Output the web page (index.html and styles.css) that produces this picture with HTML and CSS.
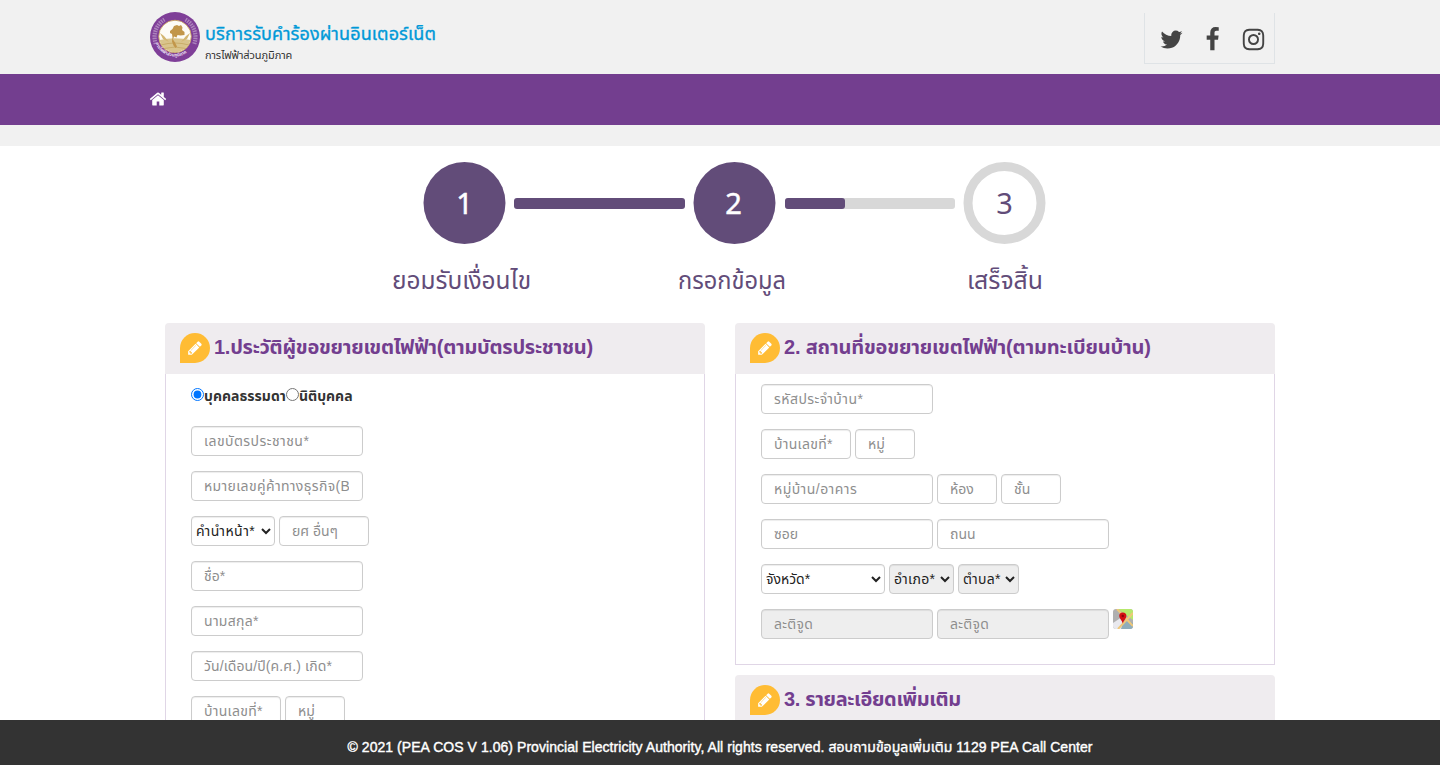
FILE: index.html
```html
<!DOCTYPE html>
<html lang="th">
<head>
<meta charset="utf-8">
<title>PEA COS</title>
<link rel="stylesheet" href="styles.css">
</head>
<body>
<svg width="0" height="0" class="defs">
  <symbol id="pencil" viewBox="0 0 1792 1792"><path d="M491 1536l91-91-235-235-91 91v107h128v128h107zm523-928q0-22-22-22-10 0-17 7l-542 542q-7 7-7 17 0 22 22 22 10 0 17-7l542-542q7-7 7-17zm-54-192l416 416-832 832h-416v-416zm683 96q0 53-37 90l-166 166-416-416 166-165q36-38 90-38 53 0 91 38l235 234q37 39 37 91z"/></symbol>
</svg>
<header class="top">
  <div class="container top-row">
    <div class="brand">
      <svg class="seal" viewBox="0 0 50 50">
        <defs><path id="arc" d="M5.500 31A20.800 20.800 0 0 0 44.500 31"/></defs>
        <circle cx="25" cy="25" r="25" fill="#7f3f98"/>
        <path d="M14.500 7.500A20.300 20.300 0 0 0 5.800 32M35.500 7.500A20.300 20.300 0 0 1 44.200 32" fill="none" stroke="#c9b0d4" stroke-width="4.200" stroke-dasharray="1.500 .9" opacity=".6"/>
        <circle cx="25" cy="24.500" r="16.300" fill="#fdfbf6" stroke="#c39a4c" stroke-width=".8"/>
        <path d="M9.500 28Q25 24.500 40.500 28A16 16 0 0 1 9.500 28z" fill="#d9c48c"/>
        <path d="M11 33Q25 29 39 33M14 36.500Q25 33.500 36 36.500" fill="none" stroke="#c2a25a" stroke-width=".7"/>
        <path d="M20 19l2.500-2 1.500-3 3-1 2 1 2-1 1.500 2.500-.5 2.500 2.500 2v3l-4 .5-3-.5-1 2.500-2.500-1-1 3 2 3 2 4-1.500 1.500-2-2.500-1.500-4 .5-4-.5-3.500-2-1z" fill="#c2964a"/>
        <path d="M10 21l4 3 5 6-6-3zM40 21l-4 3-5 6 6-3z" fill="#d3b672"/>
        <text class="seal-text"><textPath href="#arc" textLength="38" lengthAdjust="spacingAndGlyphs">การไฟฟ้าส่วนภูมิภาค</textPath></text>
      </svg>
      <div class="brand-text">
        <div class="brand-name">บริการรับคำร้องผ่านอินเตอร์เน็ต</div>
        <div class="brand-sub">การไฟฟ้าส่วนภูมิภาค</div>
      </div>
    </div>
    <div class="social">
      <svg viewBox="0 0 1792 1792"><path d="M1684 408q-67 98-162 167 1 14 1 42 0 130-38 259.5t-115.5 248.5-184.5 210.5-258 146-323 54.5q-271 0-496-145 35 4 78 4 225 0 401-138-105-2-188-64.5t-114-159.5q33 5 61 5 43 0 85-11-112-23-185.5-111.5t-73.5-205.5v-4q68 38 146 41-66-44-105-115t-39-154q0-88 44-163 121 149 294.5 238.5t371.5 99.5q-8-38-8-74 0-134 94.500-228.500t228.500-94.500q140 0 236 102 109-21 205-78-37 115-142 178 93-10 186-50z"/></svg>
      <svg viewBox="0 0 1792 1792"><path d="M1343 12v264h-157q-86 0-116 36t-30 108v189h293l-39 296h-254v759h-306v-759h-255v-296h255v-218q0-186 104-288.500t277-102.500q147 0 228 12z"/></svg>
      <svg viewBox="0 0 1792 1792"><path d="M1152 896q0-106-75-181t-181-75-181 75-75 181 75 181 181 75 181-75 75-181zm138 0q0 164-115 279t-279 115-279-115-115-279 115-279 279-115 279 115 115 279zm108-410q0 38-27 65t-65 27-65-27-27-65 27-65 65-27 65 27 27 65zm-502-220q-7 0-76.5-.5t-105.5 0-96.5 3-103 10-71.5 18.5q-50 20-88 58t-58 88q-11 29-18.5 71.5t-10 103-3 96.5 0 105.5.5 76.5-.5 76.5 0 105.5 3 96.5 10 103 18.5 71.5q20 50 58 88t88 58q29 11 71.5 18.5t103 10 96.5 3 105.5 0 76.5-.5 76.5.5 105.5 0 96.5-3 103-10 71.5-18.5q50-20 88-58t58-88q11-29 18.5-71.5t10-103 3-96.5 0-105.5-.5-76.5.5-76.5 0-105.5-3-96.5-10-103-18.5-71.5q-20-50-58-88t-88-58q-29-11-71.5-18.5t-103-10-96.5-3-105.5 0-76.5.5zm768 630q0 229-5 317-10 208-124 322t-322 124q-88 5-317 5t-317-5q-208-10-322-124t-124-322q-5-88-5-317t5-317q10-208 124-322t322-124q88-5 317-5t317 5q208 10 322 124t124 322q5 88 5 317z"/></svg>
    </div>
  </div>
</header>
<nav class="nav">
  <div class="container">
    <svg class="home" viewBox="0 0 1792 1792"><path d="M1472 992v480q0 26-19 45t-45 19h-384v-384h-256v384h-384q-26 0-45-19t-19-45v-480q0-1 .5-3t.5-3l575-474 575 474q1 2 1 6zm223-69l-62 74q-8 9-21 11h-3q-13 0-21-7l-692-577-692 577q-12 8-24 7-13-2-21-11l-62-74q-8-10-7-23.5t11-21.5l719-599q32-26 76-26t76 26l244 204v-195q0-14 9-23t23-9h192q14 0 23 9t9 23v408l219 182q10 8 11 21.5t-7 23.5z"/></svg>
  </div>
</nav>
<div class="strip"></div>
<main>
  <svg class="steps" width="680" height="167" viewBox="380 146 680 167">
    <g fill="#624c79">
      <circle cx="464.5" cy="203" r="41"/><circle cx="734.5" cy="203" r="41"/>
      <rect x="514" y="198" width="171" height="11" rx="3"/>
    </g>
    <rect x="785" y="198" width="170" height="11" rx="3" fill="#d8d8d8"/>
    <rect x="785" y="198" width="60" height="11" rx="3" fill="#624c79"/>
    <circle cx="1004.5" cy="203" r="36.5" fill="none" stroke="#d8d8d8" stroke-width="9"/>
    <g class="step-num">
      <text x="464.5" y="213.500" fill="#fff" stroke="#fff" stroke-width=".5">1</text>
      <text x="733.5" y="213.500" fill="#fff" stroke="#fff" stroke-width=".5">2</text>
      <text x="1004.5" y="213.500">3</text>
    </g>
    <g class="step-label">
      <text x="392" y="289" textLength="139" lengthAdjust="spacingAndGlyphs">ยอมรับเงื่อนไข</text>
      <text x="678" y="289" textLength="108" lengthAdjust="spacingAndGlyphs">กรอกข้อมูล</text>
      <text x="967" y="289" textLength="76" lengthAdjust="spacingAndGlyphs">เสร็จสิ้น</text>
    </g>
  </svg>
  <div class="container columns">
    <section class="panel">
      <h2><span class="badge"><svg><use href="#pencil"/></svg></span><span class="t1">1.ประวัติผู้ขอขยายเขตไฟฟ้า(ตามบัตรประชาชน)</span></h2>
      <div class="body">
        <div class="radios"><input type="radio" name="kind" checked><span>บุคคลธรรมดา</span><input type="radio" name="kind"><span>นิติบุคคล</span></div>
        <div class="row"><input class="f w172 wide" placeholder="เลขบัตรประชาชน*"></div>
        <div class="row"><input class="f w172 partner" placeholder="หมายเลขคู่ค้าทางธุรกิจ(BP)"></div>
        <div class="row"><select class="f w84 wide"><option>คำนำหน้า*</option></select><input class="f w90" placeholder="ยศ อื่นๆ"></div>
        <div class="row"><input class="f w172" placeholder="ชื่อ*"></div>
        <div class="row"><input class="f w172 mid" placeholder="นามสกุล*"></div>
        <div class="row"><input class="f w172 slight" placeholder="วัน/เดือน/ปี(ค.ศ.) เกิด*"></div>
        <div class="row"><input class="f w90 mid" placeholder="บ้านเลขที่*"><input class="f w60" placeholder="หมู่"></div>
      </div>
    </section>
    <div class="col">
      <section class="panel">
        <h2><span class="badge"><svg><use href="#pencil"/></svg></span><span class="t2">2. สถานที่ขอขยายเขตไฟฟ้า(ตามทะเบียนบ้าน)</span></h2>
        <div class="body">
          <div class="row"><input class="f w172 wide" placeholder="รหัสประจำบ้าน*"></div>
          <div class="row"><input class="f w90 mid" placeholder="บ้านเลขที่*"><input class="f w60" placeholder="หมู่"></div>
          <div class="row"><input class="f w172 wide" placeholder="หมู่บ้าน/อาคาร"><input class="f w60" placeholder="ห้อง"><input class="f w60" placeholder="ชั้น"></div>
          <div class="row"><input class="f w172" placeholder="ซอย"><input class="f w172" placeholder="ถนน"></div>
          <div class="row"><select class="f w124"><option>จังหวัด*</option></select><select class="f w65 off mid"><option>อำเภอ*</option></select><select class="f w61 off mid"><option>ตำบล*</option></select></div>
          <div class="row"><input class="f w172 off mid" placeholder="ละติจูด" readonly><input class="f w172 off mid" placeholder="ละติจูด" readonly>
            <svg class="map" viewBox="0 0 20 20">
              <defs><clipPath id="r"><rect width="20" height="20" rx="3"/></clipPath></defs>
              <g clip-path="url(#r)">
                <rect width="20" height="20" fill="#b0b0b0"/>
                <path d="M5 0h15v11L13 6z" fill="#b6e86c"/>
                <path d="M0 14L9 8l4 12H0z" fill="#e9e9ee"/>
                <path d="M11 10l9 4v6H8z" fill="#8fadbb"/>
                <path d="M4 0l16 17M20 4L5 20" stroke="#efc77a" stroke-width="2" fill="none"/>
              </g>
              <path d="M9.800 14.500C9 11.500 6.200 9.800 6.200 7.100a3.600 3.600 0 0 1 7.200 0c0 2.700-2.800 4.400-3.600 7.400z" fill="#d40f14"/>
              <circle cx="9.800" cy="7" r="1.200" fill="#8d0508"/>
            </svg></div>
        </div>
      </section>
      <section class="panel">
        <h2><span class="badge"><svg><use href="#pencil"/></svg></span><span class="t3">3. รายละเอียดเพิ่มเติม</span></h2>
        <div class="body"></div>
      </section>
    </div>
  </div>
</main>
<footer class="footer"><span>© 2021 (PEA COS V 1.06) Provincial Electricity Authority, All rights reserved. สอบถามข้อมูลเพิ่มเติม 1129 PEA Call Center</span></footer>
</body>
</html>
```
FILE: styles.css
```css
* { box-sizing: border-box; }
html, body { height: 100%; }
body {
  margin: 0;
  overflow: hidden;
  background: #fff;
  color: #333;
  font: 14px/20px "Liberation Sans", "Noto Sans Thai", "Noto Sans", sans-serif;
}
.defs { display: none; }
svg { display: block; flex: none; }
.container { width: 1140px; margin: 0 auto; }

.top { height: 74px; background: #f1f1f1; }
.top-row { display: flex; justify-content: space-between; padding-right: 15px; }
.brand { display: flex; gap: 5px; padding-top: 12px; }
.seal { width: 50px; height: 50px; }
.seal-text { font-size: 4.5px; font-weight: bold; fill: #eadff0; }
.brand-text { padding-top: 10px; white-space: nowrap; }
.brand-name {
  font-size: 18px;
  line-height: 24px;
  letter-spacing: .13px;
  color: #0099d8;
  -webkit-text-stroke: .35px #0099d8;
}
.brand-sub { font-size: 11px; line-height: 18px; letter-spacing: -.1px; color: #333; }
.social {
  display: flex;
  gap: 16px;
  width: 131px;
  height: 51px;
  margin-top: 13px;
  padding: 13.5px 0 0 14px;
  border: 1px solid #dfe3e6;
  border-top: 0;
}
.social svg { width: 25px; height: 25px; fill: #444; }

.nav { height: 51px; background: #733e8f; }
.home { width: 18px; height: 18px; fill: #fff; margin-left: -1px; }
.nav .container { padding-top: 16px; }
.strip { height: 21px; background: #f1f1f1; }

.steps { margin-left: 380px; }
.step-num { font: 29px "Noto Sans", sans-serif; text-anchor: middle; fill: #624c79; }
.step-label { font-size: 25px; fill: #624c79; }

.columns { display: flex; gap: 30px; padding: 10px 15px 0; }
.col { display: flex; flex-direction: column; gap: 10px; width: 540px; }
.panel { width: 540px; border-radius: 4px 4px 0 0; overflow: hidden; }
.panel h2 {
  display: flex;
  align-items: flex-start;
  gap: 4px;
  height: 51px;
  margin: 0;
  padding: 10px 15px 0;
  background: #efecef;
  color: #733e8f;
  font-size: 20px;
  line-height: 28px;
  white-space: nowrap;
}
.t1 { letter-spacing: -.26px; }
.t2 { letter-spacing: -.17px; }
.t3 { letter-spacing: -.35px; }
.badge {
  display: flex;
  align-items: center;
  justify-content: center;
  width: 30px;
  height: 30px;
  border-radius: 50% 50% 50% 0;
  background: #ffbc34;
}
.badge svg { width: 16px; height: 16px; fill: #fff; }
.body {
  padding: 10px 25px;
  border: 1px solid #e0d6e6;
  border-top: 0;
}
.radios {
  display: flex;
  align-items: flex-start;
  height: 27px;
  margin-bottom: 15px;
  padding-top: 4px;
  font-weight: bold;
  font-size: 14px;
  line-height: 17px;
  letter-spacing: .02px;
  white-space: nowrap;
}
.radios input { width: 13px; height: 13px; margin: 0; flex: none; }
.row { display: flex; gap: 4px; margin-bottom: 15px; }
.f {
  height: 30px;
  padding: 4px 12px;
  border: 1px solid #ccc;
  border-radius: 4px;
  background: #fff;
  color: #222;
  font: inherit;
  box-shadow: inset 0 1px 1px rgba(0, 0, 0, .075);
}
select.f { padding: 0; }
.f::placeholder { color: #8e8e8e; opacity: 1; }
.wide { letter-spacing: .45px; }
.mid { letter-spacing: .3px; }
.slight { letter-spacing: .1px; }
.partner { letter-spacing: .36px; padding-right: 13px; }
.off { background: #eee; opacity: 1; }
.w172 { width: 172px; }
.w124 { width: 124px; }
.w90 { width: 90px; }
.w84 { width: 84px; }
.w65 { width: 65px; }
.w61 { width: 61px; }
.w60 { width: 60px; }
.map { width: 20px; height: 20px; }
.footer {
  position: fixed;
  left: 0;
  right: 0;
  bottom: 0;
  height: 45px;
  padding-top: 17px;
  background: #333;
  color: #fff;
  text-align: center;
  letter-spacing: .05px;
  white-space: nowrap;
  -webkit-text-stroke: .4px #fff;
}
```
